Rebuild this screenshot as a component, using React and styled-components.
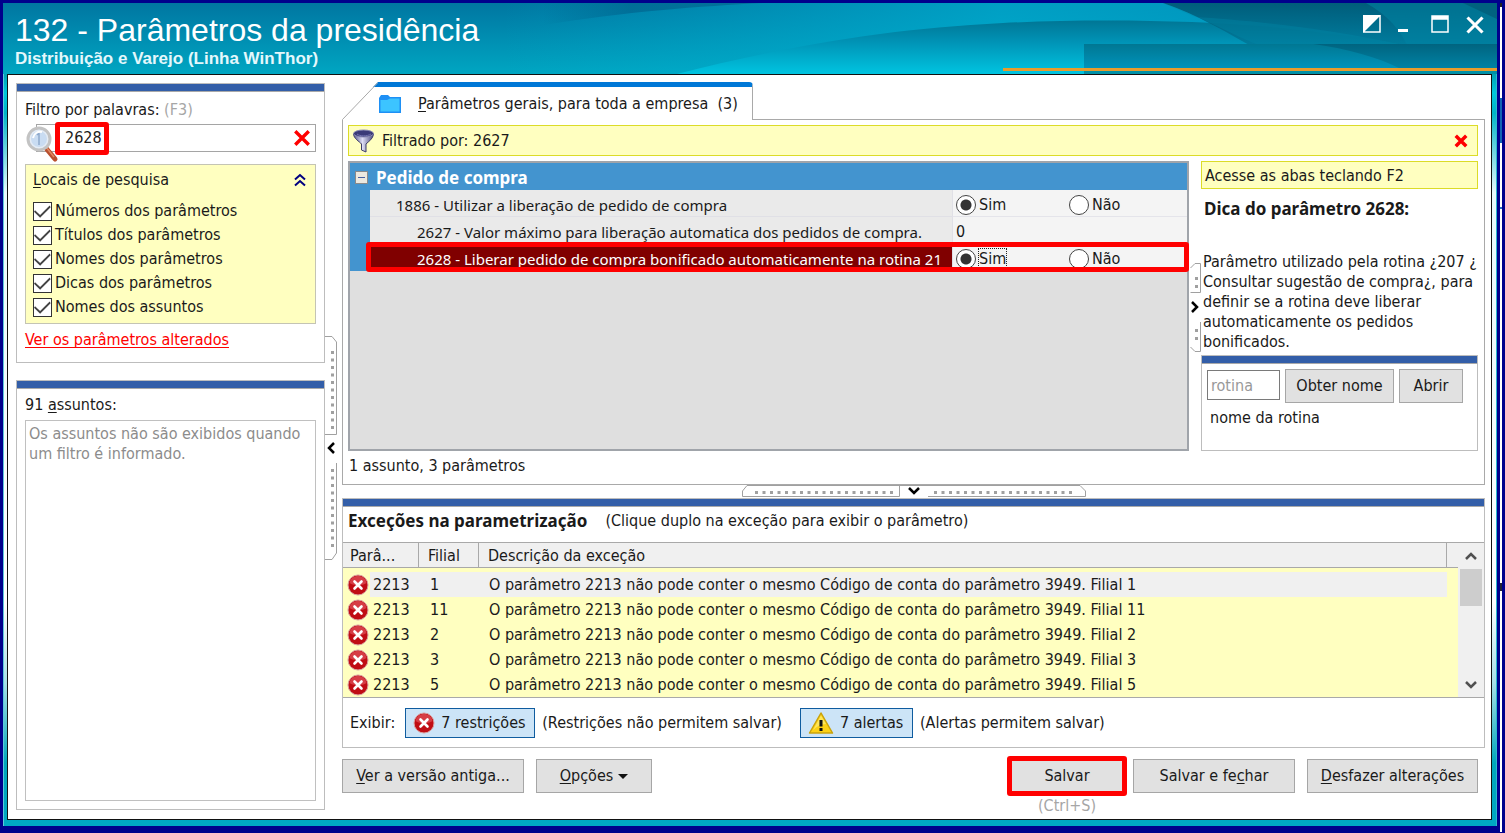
import React, { useState } from 'react';
import styled, { createGlobalStyle, css } from 'styled-components';

const LOCAIS = [
  'Números dos parâmetros',
  'Títulos dos parâmetros',
  'Nomes dos parâmetros',
  'Dicas dos parâmetros',
  'Nomes dos assuntos',
];

const EXCECOES = ['1', '11', '2', '3', '5'];

/* ---------- icons ---------- */

const HeaderArt = () => (
  <Art viewBox="0 0 1494 71" preserveAspectRatio="xMaxYMin slice" aria-hidden="true">
    <defs>
      <linearGradient id="base" x1="0" y1="0" x2="0" y2="1">
        <stop offset="0" stopColor="#0076a1" />
        <stop offset="1" stopColor="#00a6c2" />
      </linearGradient>
      <linearGradient id="glow" x1="0" y1="0" x2="1" y2="0">
        <stop offset="0" stopColor="#00b4d4" stopOpacity="0" />
        <stop offset="0.5" stopColor="#00b0d2" stopOpacity="0.7" />
        <stop offset="1" stopColor="#0090bb" stopOpacity="0.8" />
      </linearGradient>
      <linearGradient id="shade" x1="0" y1="0" x2="1" y2="0">
        <stop offset="0" stopColor="#00608a" stopOpacity="0" />
        <stop offset="0.4" stopColor="#00608a" stopOpacity="0.6" />
        <stop offset="1" stopColor="#00608a" stopOpacity="0.6" />
      </linearGradient>
      <linearGradient id="wave" x1="0" y1="0" x2="0" y2="1">
        <stop offset="0" stopColor="#007695" />
        <stop offset="0.4" stopColor="#0093b6" />
        <stop offset="1" stopColor="#00c4e0" />
      </linearGradient>
      <linearGradient id="deep" x1="0" y1="0" x2="0" y2="1">
        <stop offset="0" stopColor="#00536f" />
        <stop offset="1" stopColor="#007fa0" />
      </linearGradient>
      <linearGradient id="band" x1="0" y1="0" x2="0" y2="1">
        <stop offset="0" stopColor="#007793" />
        <stop offset="1" stopColor="#0094bb" />
      </linearGradient>
      <linearGradient id="bandDark" x1="0" y1="0" x2="0" y2="1">
        <stop offset="0" stopColor="#006480" />
        <stop offset="1" stopColor="#0083a5" />
      </linearGradient>
    </defs>
    <rect width="1494" height="71" fill="url(#base)" />
    <path d="M500 0H1494V71H500Z" fill="url(#glow)" />
    <path d="M540 0H760C700 3 620 9 540 22Z" fill="url(#shade)" />
    <path d="M674 71C780 44 880 26 1000 20C1100 15 1230 17 1320 30L1494 50V71Z" fill="url(#wave)" />
    <path d="M1160 0H1494V50H1260C1225 30 1195 12 1160 0Z" fill="url(#deep)" opacity="0.85" />
    <path d="M1160 0L1192 14C1240 17 1320 24 1400 42L1260 44C1225 30 1195 12 1160 0Z" fill="#0089a8" opacity="0.35" />
    <path d="M1363 0H1494V44H1405C1398 28 1385 12 1363 0Z" fill="#0083a3" opacity="0.55" />
    <path d="M1460 0H1494V16Z" fill="#004f6b" opacity="0.5" />
    <rect x="1081" y="41" width="413" height="25" fill="url(#band)" />
    <path d="M1310 41H1494V66H1398C1375 54 1345 46 1310 41Z" fill="url(#bandDark)" />
    <rect x="1000" y="65" width="494" height="3" fill="#e89c2c" />
    <rect x="1081" y="68" width="413" height="3" fill="#0090a6" />
  </Art>
);

const Magnifier = () => (
  <Lens width="34" height="38" viewBox="0 0 34 38" aria-hidden="true">
    <path d="M19 22L29 34" stroke="#b9502f" strokeWidth="5" strokeLinecap="round" />
    <path d="M20 22L28 32" stroke="#e08a63" strokeWidth="1.5" />
    <circle cx="13" cy="14" r="11" fill="#dfeaf7" stroke="#c3c3c3" strokeWidth="3" />
    <circle cx="13" cy="14" r="8.5" fill="#c9dcf2" stroke="#e9eef4" />
    <path d="M13 8V20M11 10L13 8" stroke="#8ea9cc" strokeWidth="1.5" fill="none" />
    <path d="M7 13C8 8 12 6 16 7" stroke="#fff" strokeWidth="2" fill="none" />
  </Lens>
);

const Cross = ({ size, weight = 3 }) => (
  <svg width={size} height={size} viewBox="0 0 16 16" aria-hidden="true">
    <path d="M2 2L14 14M14 2L2 14" stroke="currentColor" strokeWidth={weight} />
  </svg>
);

const ChevronsUp = () => (
  <svg width="12" height="14" viewBox="0 0 12 14" fill="none" stroke="#000080" strokeWidth="2" aria-hidden="true">
    <path d="M1 6.500L6 2L11 6.500M1 12.500L6 8L11 12.500" />
  </svg>
);

const Folder = () => (
  <svg width="24" height="20" viewBox="0 0 24 20" aria-hidden="true">
    <path d="M1 4L3 1H10L12 3H23V19H1Z" fill="#1e90f5" />
    <path d="M2.500 6H9L12 4.500H21.500V17.500H2.500Z" fill="#3cc4ff" />
  </svg>
);

const Funnel = () => (
  <svg width="24" height="24" viewBox="0 0 24 24" aria-hidden="true">
    <defs>
      <linearGradient id="metal" x1="0" y1="0" x2="1" y2="0">
        <stop offset="0" stopColor="#55558c" />
        <stop offset="0.45" stopColor="#dcdcf4" />
        <stop offset="1" stopColor="#4a4a80" />
      </linearGradient>
    </defs>
    <path d="M1.500 5C2 10 7 12 9.500 15V21L14 23V15C17 12 21 10 21.500 5Z" fill="url(#metal)" stroke="#3d3d68" />
    <ellipse cx="11.500" cy="4.500" rx="10" ry="3.500" fill="#3a3a78" stroke="#8a8ab4" />
    <path d="M5 5C8 7.500 15 7.500 19 5" stroke="#7474b0" fill="none" />
  </svg>
);

const ErrorIcon = () => (
  <svg width="22" height="22" viewBox="0 0 22 22" aria-hidden="true">
    <circle cx="11" cy="11" r="10" fill="#c00d14" stroke="#d9a0a0" />
    <path d="M2.500 9C3 4.500 7 2 11 2S19 4.500 19.500 9C15 12 7 12 2.500 9Z" fill="#e0525a" opacity="0.7" />
    <path d="M7.500 7.500L14.500 14.500M14.500 7.500L7.500 14.500" stroke="#fff" strokeWidth="2.600" strokeLinecap="round" />
  </svg>
);

const WarnIcon = () => (
  <svg width="26" height="24" viewBox="0 0 26 24" aria-hidden="true">
    <path d="M13 2L24.500 22H1.500Z" fill="#fcd116" stroke="#c9a20c" strokeWidth="1.500" strokeLinejoin="round" />
    <path d="M13 4.500L18 13C13 13 9 15 5 19Z" fill="#fff07a" opacity="0.7" />
    <path d="M13 9V15.500" stroke="#111" strokeWidth="3" />
    <rect x="11.500" y="17" width="3" height="3" fill="#111" />
  </svg>
);

const Caret = ({ d, color = '#000', size = 14 }) => (
  <svg width={size} height={size} viewBox="0 0 14 14" fill="none" stroke={color} strokeWidth="2.500" aria-hidden="true">
    <path d={d} />
  </svg>
);

const UP = 'M2 10L7 5L12 10';
const DOWN = 'M2 4L7 9L12 4';

const dots = (n, start, step) => Array.from({ length: n }, (_, i) => start + i * step);

const SideGrip = () => (
  <svg width="12" height="224" viewBox="0 0 12 224" fill="none" stroke="#a0a0a0" aria-hidden="true">
    <path d="M0 .500H7L11.500 6V98.500H0M11.500 127V217L7 223.500H0" />
    {dots(11, 15, 7.5).map((y) => <rect key={y} x="6" y={y} width="3" height="3" fill="#a0a0a0" stroke="none" />)}
    {dots(11, 133, 7.5).map((y) => <rect key={y} x="6" y={y} width="3" height="3" fill="#a0a0a0" stroke="none" />)}
    <path d="M9 107L4 112L9 117" stroke="#000" strokeWidth="2.500" />
  </svg>
);

const TipGrip = () => (
  <svg width="12" height="90" viewBox="0 0 12 90" fill="none" stroke="#a0a0a0" aria-hidden="true">
    <path d="M1.500 29.500H11.500V.500H6L1.500 5M11.500 59V88.500H6L1.500 84" />
    {[14, 22, 66, 74].map((y) => <rect key={y} x="6" y={y} width="3" height="3" fill="#a0a0a0" stroke="none" />)}
    <path d="M3 39L8 44L3 49" stroke="#000" strokeWidth="2.500" />
  </svg>
);

const BottomGrip = () => (
  <svg width="344" height="12" viewBox="0 0 344 12" fill="none" stroke="#a0a0a0" aria-hidden="true">
    <path d="M157.500 11.500H.500V6L5 .500H338L343.500 6V11.500H186M157.500 11.500V0" />
    {dots(19, 13, 7.5).map((x) => <rect key={x} x={x} y="6" width="3" height="3" fill="#a0a0a0" stroke="none" />)}
    {dots(19, 192, 7.5).map((x) => <rect key={x} x={x} y="6" width="3" height="3" fill="#a0a0a0" stroke="none" />)}
    <path d="M167 3L172 8L177 3" stroke="#000" strokeWidth="2.500" />
  </svg>
);

/* ---------- parts ---------- */

const SimNao = ({ name, focused }) => (
  <Options>
    <Option>
      <Radio name={name} defaultChecked />
      <Word $focused={focused}>Sim</Word>
    </Option>
    <Option>
      <Radio name={name} />
      <Word>Não</Word>
    </Option>
  </Options>
);

const FilterPanel = () => {
  const [palavra, setPalavra] = useState('2628');

  return (
    <Panel>
      <Label htmlFor="filtro" $top={8}>
        Filtro por palavras: <Faded>(F3)</Faded>
      </Label>
      <SearchBox>
        <Magnifier />
        <SearchInput id="filtro" value={palavra} onChange={(e) => setPalavra(e.target.value)} />
        <ClearButton aria-label="Limpar" onClick={() => setPalavra('')}>
          <Cross size={18} />
        </ClearButton>
        <SearchMark />
      </SearchBox>
      <Locais>
        <LocaisTitle>
          <span><u>L</u>ocais de pesquisa</span>
          <ChevronsUp />
        </LocaisTitle>
        {LOCAIS.map((nome) => (
          <CheckRow key={nome}>
            <Check defaultChecked />
            {nome}
          </CheckRow>
        ))}
      </Locais>
      <AlteredLink href="#alterados">Ver os parâmetros alterados</AlteredLink>
    </Panel>
  );
};

const ParamGrid = () => (
  <Grid>
    <GroupHead>
      <Minus aria-label="Recolher" />
      Pedido de compra
    </GroupHead>
    <GridBody>
      <ParamTable>
        <tbody>
          <ParamRow>
            <ParamName $indent={26}>1886 - Utilizar a liberação de pedido de compra</ParamName>
            <ParamValue><SimNao name="p1886" /></ParamValue>
          </ParamRow>
          <ParamRow>
            <ParamName $indent={47}>2627 - Valor máximo para liberação automatica dos pedidos de compra.</ParamName>
            <ParamValue>0</ParamValue>
          </ParamRow>
          <ParamRow $selected>
            <ParamName $indent={47}>2628 - Liberar pedido de compra bonificado automaticamente na rotina 21</ParamName>
            <ParamValue><SimNao name="p2628" focused /></ParamValue>
          </ParamRow>
        </tbody>
      </ParamTable>
    </GridBody>
  </Grid>
);

const TipColumn = () => (
  <Tip>
    <Hint>Acesse as abas teclando F2</Hint>
    <TipTitle>Dica do parâmetro 2628:</TipTitle>
    <TipText>
      Parâmetro utilizado pela rotina ¿207 ¿ Consultar sugestão de compra¿, para definir se a rotina
      deve liberar automaticamente os pedidos bonificados.
    </TipText>
    <RoutinePanel>
      <RoutineRow>
        <RoutineInput placeholder="rotina" aria-label="rotina" />
        <Button $w={109}>Obter nome</Button>
        <Button $w={64}>Abrir</Button>
      </RoutineRow>
      <RoutineName>nome da rotina</RoutineName>
    </RoutinePanel>
  </Tip>
);

const Exceptions = () => (
  <ExceptionsPanel>
    <ExceptionsTitle>
      <Strong>Exceções na parametrização</Strong>
      <span>(Clique duplo na exceção para exibir o parâmetro)</span>
    </ExceptionsTitle>
    <ListArea>
      <List>
        <colgroup>
          <Col $w={76} />
          <Col $w={60} />
          <col />
          <Col $w={9} />
        </colgroup>
        <thead>
          <tr>
            <Th>Parâ...</Th>
            <Th $pad={9}>Filial</Th>
            <Th $pad={9}>Descrição da exceção</Th>
            <Th />
          </tr>
        </thead>
        <tbody>
          {EXCECOES.map((filial, i) => (
            <ListRow key={filial} $active={i === 0}>
              <Td>
                <ParamCode><ErrorIcon />2213</ParamCode>
              </Td>
              <Td>{filial}</Td>
              <Td>O parâmetro 2213 não pode conter o mesmo Código de conta do parâmetro 3949. Filial {filial}</Td>
              <Td />
            </ListRow>
          ))}
        </tbody>
      </List>
      <Scroll>
        <Caret d={UP} color="#505050" />
        <Thumb />
        <Caret d={DOWN} color="#505050" />
      </Scroll>
    </ListArea>
    <Legend>
      <LegendLabel>Exibir:</LegendLabel>
      <Toggle $w={130}><ErrorIcon />7 restrições</Toggle>
      <LegendNote>(Restrições não permitem salvar)</LegendNote>
      <Toggle $w={113}><WarnIcon />7 alertas</Toggle>
      <span>(Alertas permitem salvar)</span>
    </Legend>
  </ExceptionsPanel>
);

const App = () => (
  <>
    <GlobalStyle />
    <Desktop>
      <Window>
        <Header>
          <HeaderArt />
          <Titles>
            <Title>132 - Parâmetros da presidência</Title>
            <Subtitle>Distribuição e Varejo (Linha WinThor)</Subtitle>
          </Titles>
          <WindowButtons>
            <WindowButton aria-label="Alternar">
              <svg width="18" height="18" viewBox="0 0 18 18">
                <path d="M1 1H17V17H1Z" fill="none" stroke="#fff" strokeWidth="1.500" />
                <path d="M0 0H18L0 18Z" fill="#fff" />
              </svg>
            </WindowButton>
            <WindowButton aria-label="Minimizar">
              <svg width="18" height="18" viewBox="0 0 18 18"><path d="M1 14H11V17H1Z" fill="#fff" /></svg>
            </WindowButton>
            <WindowButton aria-label="Maximizar">
              <svg width="18" height="18" viewBox="0 0 18 18"><path d="M1 2.500H17V17H1Z M1 1V4H17V1Z" fill="none" stroke="#fff" strokeWidth="1.500" /></svg>
            </WindowButton>
            <WindowButton aria-label="Fechar"><Cross size={20} weight={2.5} /></WindowButton>
          </WindowButtons>
        </Header>
        <Body>
          <Sidebar>
            <FilterPanel />
            <SubjectsPanel>
              <Label htmlFor="assuntos" $top={6}>91 <u>a</u>ssuntos:</Label>
              <Subjects id="assuntos" readOnly value="Os assuntos não são exibidos quando um filtro é informado." />
            </SubjectsPanel>
          </Sidebar>
          <SideSplitter><SideGrip /></SideSplitter>
          <Main>
            <Tabs>
              <svg width="36" height="38" viewBox="0 0 36 38" aria-hidden="true">
                <path d="M31 5L36 0V5Z" fill="#0078d7" />
                <path d="M.500 38V37.500L36 .500" fill="none" stroke="#a9a9a9" />
              </svg>
              <Tab>
                <Folder />
                <span><u>P</u>arâmetros gerais, para toda a empresa&nbsp; (3)</span>
              </Tab>
              <TabsRest />
            </Tabs>
            <Pane>
              <FilterBar>
                <Funnel />
                <FilterText>Filtrado por: 2627</FilterText>
                <ClearButton aria-label="Remover filtro"><Cross size={14} weight={4} /></ClearButton>
              </FilterBar>
              <PaneRow>
                <ParamGrid />
                <TipSplitter><TipGrip /></TipSplitter>
                <TipColumn />
              </PaneRow>
              <Status>1 assunto, 3 parâmetros</Status>
            </Pane>
            <BottomSplitter><BottomGrip /></BottomSplitter>
            <Exceptions />
            <Footer>
              <Button $w={182}><span><u>V</u>er a versão antiga...</span></Button>
              <Button $w={116}><span><u>O</u>pções</span><Arrow /></Button>
              <SaveGroup>
                <SaveButton $w={114}>Salvar</SaveButton>
                <Faded>(Ctrl+S)</Faded>
              </SaveGroup>
              <Button $w={162}><span>Salvar e fe<u>c</u>har</span></Button>
              <Button $w={171}><span><u>D</u>esfazer alterações</span></Button>
            </Footer>
          </Main>
        </Body>
      </Window>
      <Behind />
    </Desktop>
  </>
);

/* ---------- styles ---------- */

const GlobalStyle = createGlobalStyle`
  *, *::before, *::after {
    box-sizing: border-box;
  }
  body {
    margin: 0;
    background: #00008c;
    color: #1a1a1a;
    font: 16px/20px 'DejaVu Sans Condensed', 'Noto Sans', sans-serif;
  }
  button, input, textarea {
    font: inherit;
    color: inherit;
    margin: 0;
  }
  button, svg {
    flex: none;
  }
  u {
    text-underline-offset: 2px;
    text-decoration-skip-ink: none;
  }
`;

const mark = css`
  content: '';
  position: absolute;
  border: 5px solid #f00;
  border-radius: 3px;
  pointer-events: none;
`;

const boldText = css`
  font-family: 'Noto Sans', sans-serif;
  font-size: 17px;
  font-weight: 700;
  line-height: 20px;
`;

const Desktop = styled.div`
  min-height: 100vh;
  display: flex;
  padding: 3px 3px 0;
  background: #00008c;
`;

const Window = styled.div`
  flex: 1;
  min-width: 0;
  display: flex;
  flex-direction: column;
  margin-bottom: 7px;
  background: linear-gradient(#00a0b4 71px, #00c8dc 90px, #00b4c8 110px, #e8fbfd 190px, #fff 600px, #a8e0e8 680px, #00a8bc 760px, #00a8c4);
  box-shadow: inset 1px 0 #5cc8dc, inset -1px 0 #2cb8cc;
`;

const Behind = styled.div`
  width: 2px;
  margin: 0 0 1px 3px;
  background: linear-gradient(#222 4px, #fff 4px 95px, #1264b4 95px 140px, #fff 140px 204px, #2a6cc0 204px 206px, #fff 206px 580px, #223 580px 588px, #fff 588px);
`;

const Header = styled.header`
  position: relative;
  height: 71px;
  flex: none;
  display: flex;
  justify-content: space-between;
  overflow: hidden;
  color: #fff;
`;

const Art = styled.svg`
  position: absolute;
  top: 0;
  right: 0;
  width: 100%;
  height: 71px;
`;

const Titles = styled.div`
  position: relative;
  padding: 9px 0 0 12px;
  font-family: 'Liberation Sans', Arial, sans-serif;
`;

const Title = styled.h1`
  margin: 0;
  font-size: 32px;
  line-height: 36px;
  font-weight: 400;
`;

const Subtitle = styled.p`
  margin: 0;
  font-size: 17px;
  line-height: 22px;
  font-weight: 700;
  color: #e4f8fc;
`;

const WindowButtons = styled.div`
  position: relative;
  display: flex;
  gap: 16px;
  padding: 12px 12px 0 0;
  align-items: flex-start;
`;

const WindowButton = styled.button`
  display: flex;
  padding: 0;
  border: 0;
  background: none;
`;

const Body = styled.div`
  flex: 1;
  display: flex;
  margin: 0 5px 6px 4px;
  padding: 7px 6px 0 8px;
  border: 1px solid #111;
  background: #fff;
`;

const Sidebar = styled.aside`
  width: 309px;
  flex: none;
  display: flex;
  flex-direction: column;
  gap: 17px;
  padding: 1px 0 9px;
`;

const Panel = styled.section`
  display: flex;
  flex-direction: column;
  padding: 0 8px 12px;
  border: 1px solid #bdbdbd;
  background: #fff;

  &::before {
    content: '';
    flex: none;
    height: 8px;
    margin: 0 -8px;
    background: #335ea8;
    border-bottom: 1px solid #a9a9a9;
  }
`;

const SubjectsPanel = styled(Panel)`
  flex: 1;
  padding-bottom: 8px;
`;

const Label = styled.label`
  padding-top: ${(p) => p.$top}px;
`;

const Faded = styled.span`
  color: #a6a6a6;
`;

const SearchBox = styled.div`
  position: relative;
  display: flex;
  align-items: center;
  height: 28px;
  margin: 4px 0 12px 11px;
  padding-right: 4px;
  border: 1px solid #a5a5a5;
`;

const Lens = styled.svg`
  position: absolute;
  left: -11px;
  top: 0;
`;

const SearchInput = styled.input`
  flex: 1;
  min-width: 0;
  padding: 0 0 0 28px;
  border: 0;
  outline: 0;
  background: none;
`;

const SearchMark = styled.span`
  &::after {
    ${mark}
    inset: -3px auto -4px 18px;
    width: 54px;
  }
`;

const ClearButton = styled.button`
  display: flex;
  padding: 0;
  border: 0;
  background: none;
  color: #f00;
`;

const Locais = styled.div`
  padding: 5px 7px 4px;
  border: 1px solid #c4c4b4;
  background: #ffffc0;
`;

const LocaisTitle = styled.div`
  display: flex;
  justify-content: space-between;
  align-items: center;
  padding-right: 2px;
  margin-bottom: 9px;
`;

const CheckRow = styled.label`
  display: flex;
  align-items: center;
  gap: 3px;
  height: 24px;
`;

const Check = styled.input.attrs({ type: 'checkbox' })`
  appearance: none;
  width: 19px;
  height: 19px;
  flex: none;
  border: 1px solid #333;
  background: #fff;

  &:checked::after {
    content: '';
    display: block;
    height: 17px;
    background: #444;
    clip-path: polygon(6% 45%, 36% 74%, 92% 18%, 98% 28%, 36% 90%, 0 55%);
  }
`;

const AlteredLink = styled.a`
  align-self: flex-start;
  margin-top: 6px;
  color: #f00;
  text-underline-offset: 2px;
  text-decoration-skip-ink: none;
`;

const Subjects = styled.textarea`
  flex: 1;
  margin-top: 5px;
  padding: 3px;
  border: 1px solid #c0c0c0;
  outline: 0;
  resize: none;
  color: #8c8c8c;
`;

const SideSplitter = styled.div`
  width: 12px;
  flex: none;
  padding-top: 254px;
`;

const Main = styled.main`
  flex: 1;
  min-width: 0;
  display: flex;
  flex-direction: column;
  margin-left: 5px;
  padding-bottom: 3px;
`;

const Tabs = styled.div`
  display: flex;
  height: 38px;
`;

const Tab = styled.button`
  display: flex;
  align-items: center;
  gap: 16px;
  padding: 0 14px 0 0;
  border: 0;
  border-top: 5px solid #0078d7;
  border-right: 1px solid #a9a9a9;
  border-top-right-radius: 4px;
  background: #fff;
`;

const TabsRest = styled.div`
  flex: 1;
  border-bottom: 1px solid #a9a9a9;
`;

const Pane = styled.div`
  flex: 1;
  display: flex;
  flex-direction: column;
  padding: 5px 6px 0 5px;
  border: 1px solid #a9a9a9;
  border-top: 0;
`;

const FilterBar = styled.div`
  display: flex;
  align-items: center;
  height: 31px;
  margin-bottom: 5px;
  padding: 0 9px 0 3px;
  border: 1px solid #dcdc28;
  background: #ffffc0;
`;

const FilterText = styled.span`
  flex: 1;
  margin-left: 6px;
`;

const PaneRow = styled.div`
  flex: 1;
  display: flex;
`;

const Grid = styled.div`
  flex: 1;
  min-width: 0;
  border: 2px solid #a0a4aa;
  background: #dfdfdf;
`;

const GroupHead = styled.div`
  ${boldText}
  display: flex;
  align-items: center;
  gap: 8px;
  height: 27px;
  padding: 2px 0 0 5px;
  background: #4394cf;
  color: #fff;
`;

const Minus = styled.button`
  width: 13px;
  height: 13px;
  padding: 0;
  border: 1px solid #8a8a8a;
  background: linear-gradient(#4860a0, #4860a0) center / 7px 1px no-repeat, #ece9e0;
`;

const GridBody = styled.div`
  padding-left: 20px;
  background: #4394cf;
`;

const ParamTable = styled.table`
  width: 100%;
  table-layout: fixed;
  border-collapse: separate;
  border-spacing: 0;
`;

const ParamName = styled.td`
  height: 27px;
  padding: 3px 0 0 ${(p) => p.$indent}px;
  overflow: hidden;
  white-space: nowrap;
  font-family: 'Noto Sans', sans-serif;
  font-size: 15px;
  background: #eaeaea;
  border-bottom: 1px solid #e0e0e6;
`;

const ParamValue = styled.td`
  width: 235px;
  height: 27px;
  padding: 3px 0 0 3px;
  background: #f4f4f4;
  border-bottom: 1px solid #e4e4ea;
  border-left: 1px solid #e0e0e6;
`;

const ParamRow = styled.tr`
  position: relative;

  ${(p) => p.$selected && css`
    ${ParamName} {
      background: #800000;
      color: #fff;
    }
    ${ParamName}::before {
      ${mark}
      inset: -2px -2px -1px -4px;
    }
  `}
`;

const Options = styled.div`
  display: flex;
`;

const Option = styled.label`
  display: flex;
  align-items: center;
  gap: 3px;
  width: 113px;
`;

const Radio = styled.input.attrs({ type: 'radio' })`
  appearance: none;
  width: 20px;
  height: 20px;
  flex: none;
  border: 1px solid #444;
  border-radius: 50%;
  background: #fff;

  &:checked {
    background: radial-gradient(circle, #333 5px, #fff 6px);
  }
`;

const Word = styled.span`
  outline: ${(p) => (p.$focused ? '1px dotted #222' : '0')};
`;

const TipSplitter = styled.div`
  width: 12px;
  flex: none;
  padding-top: 102px;
`;

const Tip = styled.div`
  width: 277px;
  flex: none;
  display: flex;
  flex-direction: column;
`;

const Hint = styled.div`
  padding: 4px 3px 2px;
  height: 28px;
  border: 1px solid #dcdc28;
  background: #ffffc0;
`;

const TipTitle = styled.h2`
  ${boldText}
  margin: 10px 0 33px 3px;
`;

const TipText = styled.p`
  margin: 0;
  padding-left: 2px;
`;

const RoutinePanel = styled(Panel)`
  margin-top: auto;
  padding: 0 5px 22px;

  &::before {
    margin: 0 -5px;
  }
`;

const Button = styled.button`
  display: flex;
  align-items: center;
  justify-content: center;
  gap: 5px;
  width: ${(p) => p.$w}px;
  height: 34px;
  padding: 0;
  border: 1px solid #a6a6a6;
  background: #e1e1e1;
`;

const RoutineRow = styled.div`
  display: flex;
  gap: 5px;
  padding-top: 5px;
`;

const RoutineInput = styled.input`
  width: 73px;
  height: 30px;
  margin-top: 1px;
  padding: 0 3px;
  border: 1px solid #7a7a7a;

  &::placeholder {
    color: #999;
    opacity: 1;
  }
`;

const RoutineName = styled.span`
  margin: 5px 0 0 3px;
`;

const Status = styled.div`
  padding: 5px 0 8px 1px;
`;

const BottomSplitter = styled.div`
  display: flex;
  justify-content: center;
  height: 13px;
`;

const ExceptionsPanel = styled(Panel)`
  padding: 0;

  &::before {
    margin: 0;
  }
`;

const ExceptionsTitle = styled.div`
  display: flex;
  align-items: center;
  gap: 18px;
  height: 35px;
  padding: 0 0 7px 5px;
`;

const Strong = styled.h2`
  ${boldText}
  margin: 0;
`;

const ListArea = styled.div`
  display: flex;
  border: solid #a9a9a9;
  border-width: 1px 0;
  background: #ffffc0;
`;

const List = styled.table`
  flex: 1;
  min-width: 0;
  table-layout: fixed;
  border-spacing: 0;

  tbody::before {
    content: '';
    display: block;
    height: 4px;
  }
`;

const Col = styled.col`
  width: ${(p) => p.$w}px;
`;

const Th = styled.th`
  height: 25px;
  padding: 2px 0 0 ${(p) => p.$pad || 7}px;
  text-align: left;
  font-weight: 400;
  background: #f0f0f0;
  border-right: 1px solid #a9a9a9;
  border-bottom: 1px solid #a9a9a9;

  &:last-child {
    border-right: 0;
  }
`;

const Td = styled.td`
  height: 25px;
  padding: 1px 0 0 11px;
  white-space: nowrap;

  &:first-child {
    padding-left: 4px;
  }
  &:nth-child(3) {
    padding-left: 10px;
  }
`;

const ListRow = styled.tr`
  ${(p) => p.$active && css`
    ${Td} {
      background: #f0f0f0;
    }
    ${Td}:first-child {
      background: linear-gradient(to right, #ffffc0 27px, #f0f0f0 27px);
    }
    ${Td}:last-child {
      background: none;
    }
  `}
`;

const ParamCode = styled.div`
  display: flex;
  align-items: center;
  gap: 4px;
`;

const Scroll = styled.div`
  width: 26px;
  display: flex;
  flex-direction: column;
  align-items: center;
  padding: 6px 0 5px;
  background: #f0f0f0;

  svg:last-child {
    margin-top: auto;
  }
`;

const Thumb = styled.div`
  width: 22px;
  height: 37px;
  margin-top: 6px;
  background: #cdcdcd;
`;

const Legend = styled.div`
  display: flex;
  align-items: center;
  gap: 7px;
  height: 49px;
  padding-left: 7px;
`;

const LegendLabel = styled.span`
  margin-right: 3px;
`;

const LegendNote = styled.span`
  margin-right: 11px;
`;

const Toggle = styled.button`
  display: flex;
  align-items: center;
  gap: 6px;
  width: ${(p) => p.$w}px;
  height: 30px;
  padding: 0 0 0 7px;
  border: 1px solid #0f5c9f;
  background: #cce4f7;
`;

const Footer = styled.footer`
  display: flex;
  align-items: flex-start;
  gap: 12px;
  padding: 11px 7px 0 0;
`;

const SaveGroup = styled.div`
  display: flex;
  flex-direction: column;
  align-items: center;
  gap: 3px;
  margin: 0 -3px 0 auto;
`;

const SaveButton = styled(Button)`
  position: relative;

  &::after {
    ${mark}
    inset: -4px;
  }
`;

const Arrow = styled.span`
  border: 5px solid transparent;
  border-top-color: #111;
  border-bottom: 0;
`;

export default App;
